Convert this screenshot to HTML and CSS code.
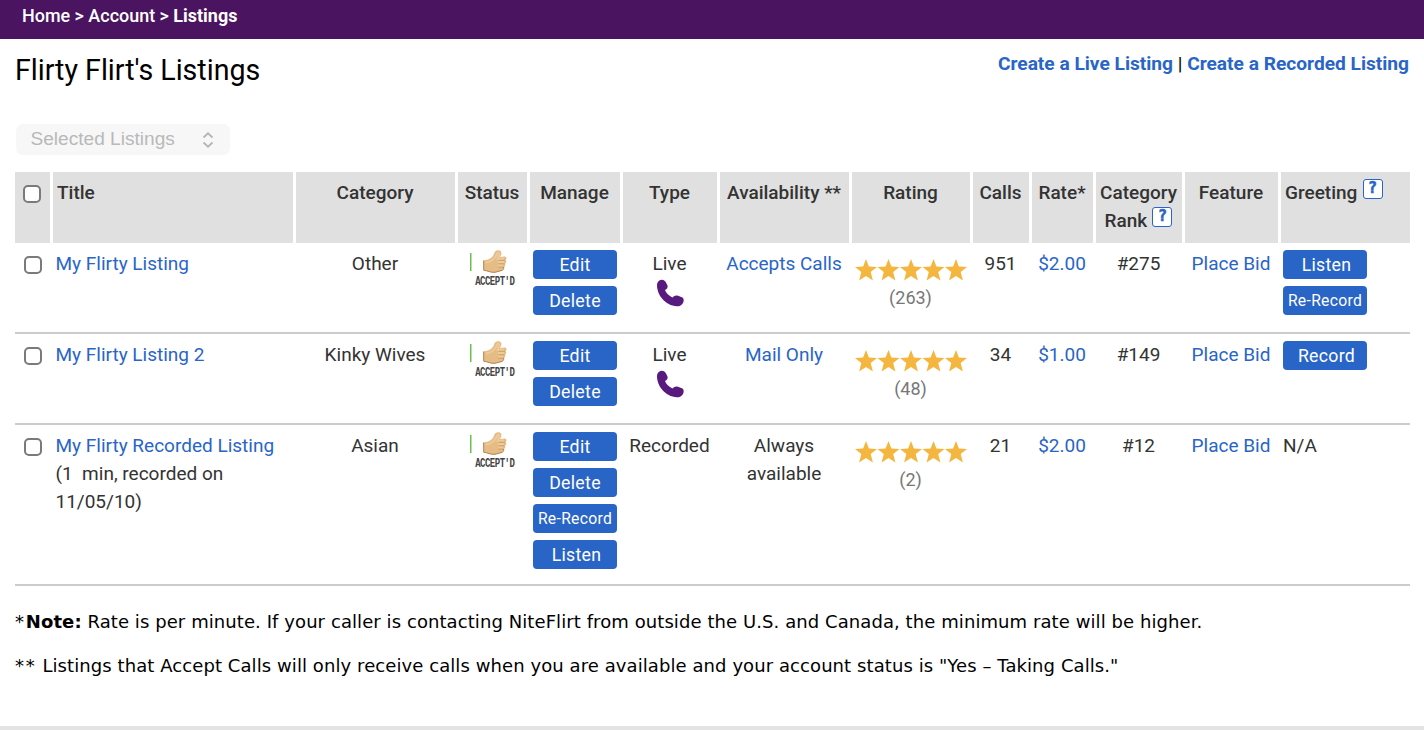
FILE: index.html
```html
<!DOCTYPE html>
<html lang="en">
<head>
    <meta charset="UTF-8">
    <meta name="viewport" content="width=device-width, initial-scale=1.0">
    <title>Listings</title>
    <link rel="stylesheet" href="styles.css">
</head>
<body>
    <svg class="sprites" width="0" height="0">
        <symbol id="thumb" viewBox="0 0 24 23">
            <path d="M.500 10.500 L5 9.500 C8 8.500 10 6.500 11 4 C11.500 1.500 13 .3 15 .3 C18.500 .3 19 3 18 5 L17 7 L21.500 6.500 C23.900 6.500 24 9.300 22.500 10 C23.700 11 23.500 13 22 13.500 C22.800 15 22 16.800 20.700 17 C21 19 20 20.500 18 20.700 L12 22.300 C7 23 5 20.500 .800 20.500 Z" fill="#e5bc85"/>
            <path d="M2.500 12.500 C8 12 11 9.500 13 6 L14.500 3 C15.500 2 16.700 3 16.200 4.500 L14.500 9 L21 8.500 M15 12 H21 M15 15.500 H20" fill="none" stroke="#eecb9a" stroke-width="1.8"/>
            <path d="M15.500 10.400 H22 M15.500 13.800 H21.500 M15 17.200 H20.500" stroke="#c99a62" stroke-width=".8"/>
            <path d="M.700 20.300 C5 20.500 7 22.800 12 22.300 L18 20.700 C20 20.500 21 19 20.700 17 M.700 10.500 V20" fill="none" stroke="#b18350" stroke-width="1"/>
        </symbol>
        <symbol id="phone" viewBox="0 0 28 28">
            <path d="M1 6 C1 3 3 1 5.500 .7 C7.500 .5 9 1.500 9.700 3 L11.500 6.500 C12 8.500 11 10 9 11 C10 14 13 17 16.500 18.500 C18 16.500 20 16 22 16.700 L26.500 18.500 C28 19.500 28 22 27 24 C25.500 26.500 24 27.300 21 27.300 C9 26.500 1 16 1 6 Z" fill="#591a7f"/>
        </symbol>
        <symbol id="stars" viewBox="0 0 112 22">
            <g fill="#f5b63f">
                <path id="star" d="M11 0 L13.900 7.600 L22 8 L15.700 13.100 L17.900 21.500 L11 16.900 L4.100 21.500 L6.300 13.100 L0 8 L8.100 7.600 Z"/>
                <use href="#star" x="22.500"/>
                <use href="#star" x="45"/>
                <use href="#star" x="67.500"/>
                <use href="#star" x="90"/>
            </g>
        </symbol>
    </svg>

    <div class="breadcrumb">Home &gt; Account &gt; <b>Listings</b></div>

    <div class="content">
        <div class="page-header">
            <h1>Flirty Flirt's Listings</h1>
            <div class="create-links"><a href="#">Create a Live Listing</a> | <a href="#">Create a Recorded Listing</a></div>
        </div>

        <div class="bulk-select">
            <span>Selected Listings</span>
            <svg width="12" height="16" viewBox="0 0 12 16"><path d="M1.500 5.500 L6 1.300 L10.500 5.500 M1.500 10.500 L6 14.700 L10.500 10.500"/></svg>
        </div>

        <table class="listings">
            <colgroup>
                <col class="c-check"><col class="c-title"><col class="c-category"><col class="c-status">
                <col class="c-manage"><col class="c-type"><col class="c-avail"><col class="c-rating">
                <col class="c-calls"><col class="c-rate"><col class="c-rank"><col class="c-feature"><col class="c-greeting">
            </colgroup>
            <thead>
                <tr>
                    <th><input type="checkbox"></th>
                    <th class="left">Title</th>
                    <th>Category</th>
                    <th>Status</th>
                    <th>Manage</th>
                    <th>Type</th>
                    <th>Availability **</th>
                    <th>Rating</th>
                    <th>Calls</th>
                    <th>Rate*</th>
                    <th>Category Rank <span class="help">?</span></th>
                    <th>Feature</th>
                    <th class="left">Greeting <span class="help">?</span></th>
                </tr>
            </thead>
            <tbody>
                <tr>
                    <td><input type="checkbox"></td>
                    <td class="left"><a href="#">My Flirty Listing</a></td>
                    <td>Other</td>
                    <td><div class="status"><svg class="thumb"><use href="#thumb"/></svg><span>ACCEPT'D</span></div></td>
                    <td class="buttons"><a href="#" class="btn">Edit</a><a href="#" class="btn">Delete</a></td>
                    <td>Live<svg class="phone"><use href="#phone"/></svg></td>
                    <td><a href="#">Accepts Calls</a></td>
                    <td class="rating"><svg class="stars"><use href="#stars"/></svg>(263)</td>
                    <td>951</td>
                    <td><a href="#">$2.00</a></td>
                    <td>#275</td>
                    <td><a href="#">Place Bid</a></td>
                    <td class="buttons greeting"><a href="#" class="btn nudge">Listen</a><a href="#" class="btn small">Re-Record</a></td>
                </tr>
                <tr>
                    <td><input type="checkbox"></td>
                    <td class="left"><a href="#">My Flirty Listing 2</a></td>
                    <td>Kinky Wives</td>
                    <td><div class="status"><svg class="thumb"><use href="#thumb"/></svg><span>ACCEPT'D</span></div></td>
                    <td class="buttons"><a href="#" class="btn">Edit</a><a href="#" class="btn">Delete</a></td>
                    <td>Live<svg class="phone"><use href="#phone"/></svg></td>
                    <td><a href="#">Mail Only</a></td>
                    <td class="rating"><svg class="stars"><use href="#stars"/></svg>(48)</td>
                    <td>34</td>
                    <td><a href="#">$1.00</a></td>
                    <td>#149</td>
                    <td><a href="#">Place Bid</a></td>
                    <td class="buttons greeting"><a href="#" class="btn nudge">Record</a></td>
                </tr>
                <tr class="tall">
                    <td><input type="checkbox"></td>
                    <td class="left"><a href="#">My Flirty Recorded Listing</a><br>(1 &nbsp;min, recorded on<br>11/05/10)</td>
                    <td>Asian</td>
                    <td><div class="status"><svg class="thumb"><use href="#thumb"/></svg><span>ACCEPT'D</span></div></td>
                    <td class="buttons"><a href="#" class="btn">Edit</a><a href="#" class="btn">Delete</a><a href="#" class="btn small">Re-Record</a><a href="#" class="btn nudge">Listen</a></td>
                    <td>Recorded</td>
                    <td>Always available</td>
                    <td class="rating"><svg class="stars"><use href="#stars"/></svg>(2)</td>
                    <td>21</td>
                    <td><a href="#">$2.00</a></td>
                    <td>#12</td>
                    <td><a href="#">Place Bid</a></td>
                    <td class="left greeting">N/A</td>
                </tr>
            </tbody>
        </table>

        <div class="notes">
            <p class="rate-note"><span class="mark">*</span><b>Note:</b> Rate is per minute. If your caller is contacting NiteFlirt from outside the U.S. and Canada, the minimum rate will be higher.</p>
            <p class="calls-note"><span class="mark">**</span> Listings that Accept Calls will only receive calls when you are available and your account status is "Yes – Taking Calls."</p>
        </div>
    </div>
    <div class="footer-line"></div>
</body>
</html>
```
FILE: styles.css
```css
* {
    box-sizing: border-box;
}

body {
    margin: 0;
    height: 730px;
    display: flex;
    flex-direction: column;
    overflow: hidden;
    background: #fff;
    color: #000;
    font-family: Roboto, Arial, sans-serif;
    font-size: 19px;
    line-height: 28px;
}

a {
    color: #2965c7;
    text-decoration: none;
}

.sprites {
    position: absolute;
}

.breadcrumb {
    flex: none;
    height: 39px;
    padding: 2px 22px 0;
    background: #4a1460;
    color: #fff;
    font-size: 17.95px;
    font-weight: 500;
}

.content {
    flex: 1;
    padding: 0 14px 0 15px;
}

.page-header {
    display: flex;
    justify-content: space-between;
    height: 85px;
}

.page-header h1 {
    margin: 0;
    padding-top: 17px;
    font-size: 28.6px;
    font-weight: 400;
    line-height: 28px;
}

.create-links {
    padding: 11px 1px 0 0;
    font-size: 19.15px;
}

.create-links a {
    font-weight: 700;
}

.bulk-select {
    display: flex;
    align-items: center;
    justify-content: space-between;
    width: 214px;
    height: 31px;
    margin: 0 0 17px 1px;
    padding: 0 16px 0 14.5px;
    border-radius: 7px;
    background: #f7f7f7;
    color: #b9b9b9;
    font: 19.1px "Liberation Sans", Arial, sans-serif;
}

.bulk-select span {
    padding-bottom: 2px;
}

.bulk-select svg {
    fill: none;
    stroke: #b5b5b5;
    stroke-width: 1.8;
}

.listings {
    width: 1395px;
    table-layout: fixed;
    border-collapse: collapse;
    color: #333;
}

.c-check { width: 38px; }
.c-title { width: 243px; }
.c-category { width: 162px; }
.c-status { width: 72px; }
.c-manage { width: 93px; }
.c-type { width: 97px; }
.c-avail { width: 132px; }
.c-rating { width: 121px; }
.c-calls { width: 59px; }
.c-rate { width: 64px; }
.c-rank { width: 89px; }
.c-feature { width: 96px; }
.c-greeting { width: 129px; }

.listings th,
.listings td {
    padding: 7px 4px 0 0;
    vertical-align: top;
    text-align: center;
}

.listings th {
    height: 71px;
    background: linear-gradient(#e0e0e0, #e0e0e0) no-repeat 0 0 / calc(100% - 3px) 100%;
    font-weight: 500;
}

.listings th:last-child {
    background-size: 100% 100%;
}

.listings th.left {
    padding-left: 4px;
    text-align: left;
}

.listings td.left {
    padding-left: 2.5px;
    text-align: left;
}

.listings tbody tr {
    height: 91px;
    box-shadow: inset 0 -2px #ccc;
}

.listings tbody tr.tall {
    height: 161px;
}

.listings input {
    appearance: none;
    display: block;
    width: 18px;
    height: 18px;
    margin: 6px 0 0 8px;
    border: 2px solid #7a7a7a;
    border-radius: 5px;
    background: #fff;
}

.listings td input {
    margin-left: 9px;
}

.help {
    display: inline-block;
    width: 20px;
    height: 20px;
    margin: -6px 0 0 .5px;
    border: 1.5px solid #2965c7;
    border-radius: 3px;
    background: #fff;
    color: #2965c7;
    font: bold 15px/17px "DejaVu Sans Mono", monospace;
    text-align: center;
    vertical-align: 6px;
    -webkit-text-stroke: .6px #2965c7;
}

.status {
    width: 45px;
    height: 37px;
    margin-left: 12px;
    background: linear-gradient(#6cc04a, #6cc04a) no-repeat 0 3px / 1.5px 18px;
}

.thumb {
    display: block;
    width: 24px;
    height: 23px;
    margin-left: 13px;
}

.status span {
    display: block;
    padding: 3px 0 0 4.5px;
    color: #444;
    font: bold 9px/13px "Liberation Mono", monospace;
    letter-spacing: -.5px;
    transform: scaleY(1.35);
}

.listings .buttons {
    padding-left: 3px;
    text-align: left;
}

.listings td.greeting {
    padding-left: 2px;
}

.btn {
    display: block;
    width: 84px;
    height: 29px;
    margin-bottom: 7px;
    border-radius: 4px;
    background: #2965c7;
    color: #fff;
    font-size: 17.7px;
    letter-spacing: .3px;
    line-height: 30px;
    text-align: center;
}

.btn.nudge {
    padding-left: 3px;
}

.btn.small {
    font-size: 15.7px;
    letter-spacing: .3px;
}

.phone {
    display: block;
    width: 28px;
    height: 28px;
    margin: 1px auto 0;
}

.listings .rating {
    color: #777;
    font-size: 18px;
}

.stars {
    display: block;
    width: 112px;
    height: 22px;
    margin: 9px 0 3px 2.5px;
}

.notes {
    font-family: Verdana, "DejaVu Sans", sans-serif;
    font-size: 18px;
    letter-spacing: .08px;
}

.notes p {
    margin: 0;
    padding-top: 16px;
    white-space: nowrap;
}

.notes .rate-note {
    padding-top: 22px;
}

.mark {
    letter-spacing: 1.8px;
}

.footer-line {
    flex: none;
    height: 4px;
    background: #e3e3e3;
}
```
